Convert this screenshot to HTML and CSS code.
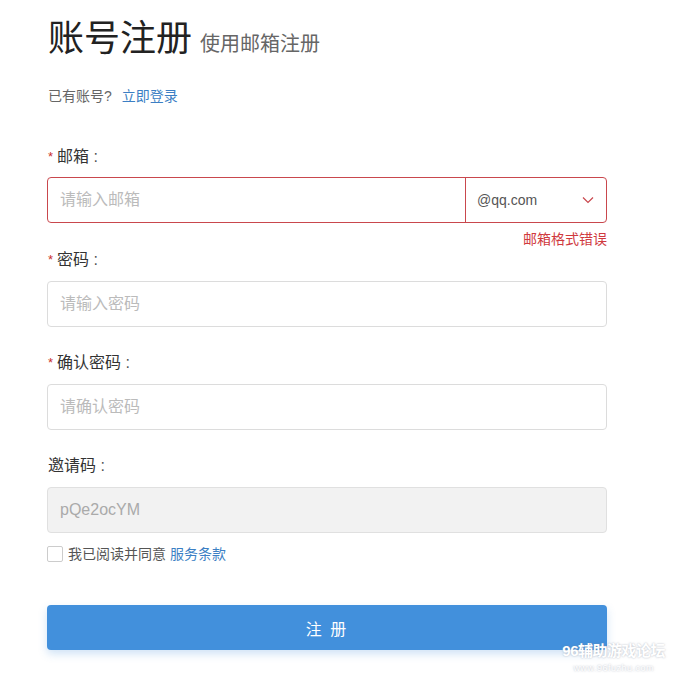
FILE: index.html
```html
<html lang="zh-CN">
<head>
  <meta charset="UTF-8" />
  <meta name="viewport" content="width=device-width, initial-scale=1.0"/>
  <title>账号注册</title>
  <link rel="stylesheet" href="styles.css">
</head>
<body>
  <div id="container">
    <div class="title">
      <h1>账号注册</h1>
      <span class="sub">使用邮箱注册</span>
    </div>
    <p class="login">已有账号? <a href="#">立即登录</a></p>

    <div class="form">
      <div class="field has-error">
        <div class="label"><span class="star">*</span>邮箱 <span class="colon">:</span></div>
        <div class="input-group">
          <input type="text" class="input" placeholder="请输入邮箱" />
          <div class="select">
            <span>@qq.com</span>
            <svg width="12" height="8" viewBox="0 0 12 8">
              <polyline points="1,1.5 6,6.5 11,1.5" fill="none" stroke="#c9474d" stroke-width="1.2"/>
            </svg>
          </div>
        </div>
        <div class="error">邮箱格式错误</div>
      </div>

      <div class="field">
        <div class="label"><span class="star">*</span>密码 <span class="colon">:</span></div>
        <input type="password" class="input box" placeholder="请输入密码" />
      </div>

      <div class="field">
        <div class="label"><span class="star">*</span>确认密码 <span class="colon">:</span></div>
        <input type="password" class="input box" placeholder="请确认密码" />
      </div>

      <div class="field">
        <div class="label">邀请码 <span class="colon">:</span></div>
        <input type="text" class="input box" value="pQe2ocYM" disabled />
      </div>

      <label class="agree">
        <span class="check"></span>
        我已阅读并同意 <a href="#">服务条款</a>
      </label>

      <button class="submit">注 册</button>
    </div>

    <div class="mark">
      <div class="mark-big">96辅助游戏论坛</div>
      <div class="mark-small">www.96fuzhu.com</div>
    </div>
  </div>
</body>
</html>
```

FILE: styles.css
```css
* {
  box-sizing: border-box;
  margin: 0;
  padding: 0;
  font-family: "Liberation Sans", "Noto Sans CJK SC", sans-serif;
}

body {
  background: #fff;
  color: #333;
}

#container {
  position: relative;
  width: 675px;
  height: 694px;
  padding: 17px 68px 0 47px;
}

.title {
  display: flex;
  align-items: baseline;
  gap: 8px;
  padding-left: 1px;
}

.title h1 {
  font-size: 36px;
  font-weight: normal;
  line-height: 43px;
  color: #222;
}

.title .sub {
  font-size: 20px;
  color: #666;
}

.login {
  margin-top: 26px;
  padding-left: 1px;
  font-size: 14px;
  line-height: 20px;
  color: #666;
}

.login a {
  margin-left: 6px;
}

.login a,
.agree a {
  color: #3c7fc4;
  text-decoration: none;
}

.form {
  margin-top: 41px;
}

.field {
  margin-bottom: 26px;
}

.field.has-error {
  margin-bottom: 0;
}

.label {
  font-size: 16px;
  line-height: 20px;
  color: #333;
  padding-left: 1px;
  margin-bottom: 11px;
}

.has-error .label {
  margin-bottom: 10px;
}

.star {
  color: #c9302c;
  font-size: 13px;
  margin-right: 4px;
  vertical-align: 1px;
}

.colon {
  color: #555;
}

.input {
  height: 46px;
  padding: 0 12px;
  font-size: 16px;
  color: #333;
  border: none;
  outline: none;
  background: transparent;
}

.input::placeholder {
  color: #bbb;
}

.box {
  display: block;
  width: 100%;
  border: 1px solid #dcdcdc;
  border-radius: 4px;
}

.box:disabled {
  background: #f2f2f2;
  border-color: #e0e0e0;
  color: #aaa;
}

.input-group {
  display: flex;
  height: 46px;
  border: 1px solid #c9474d;
  border-radius: 4px;
}

.input-group .input {
  flex: 1;
  height: 44px;
}

.select {
  width: 141px;
  display: flex;
  align-items: center;
  justify-content: space-between;
  padding: 0 12px 0 11px;
  border-left: 1px solid #c9474d;
  font-size: 14px;
  color: #555;
}

.error {
  margin-top: 6px;
  height: 21px;
  text-align: right;
  font-size: 14px;
  line-height: 20px;
  color: #d0393e;
}

.agree {
  display: flex;
  align-items: center;
  font-size: 14px;
  line-height: 20px;
  color: #555;
  margin-top: -15px;
}

.agree a {
  margin-left: 4px;
}

.check {
  width: 16px;
  height: 16px;
  border: 1px solid #ccc;
  border-radius: 2px;
  margin-right: 5px;
  background: #fff;
}

.submit {
  display: block;
  width: 100%;
  height: 45px;
  margin-top: 41px;
  border: none;
  border-radius: 4px;
  background: #4290dc;
  color: #fff;
  font-size: 16px;
  letter-spacing: 2px;
  box-shadow: 0 4px 8px rgba(66, 144, 220, 0.25);
}

.mark {
  position: absolute;
  right: 10px;
  top: 641px;
  text-align: center;
  color: #fff;
  text-shadow: 0 0 2px rgba(120, 130, 150, 0.6);
}

.mark-big {
  font-size: 15px;
  font-weight: bold;
  line-height: 20px;
  letter-spacing: -0.5px;
}

.mark-small {
  font-size: 9px;
  line-height: 14px;
  letter-spacing: 0.5px;
}
```
